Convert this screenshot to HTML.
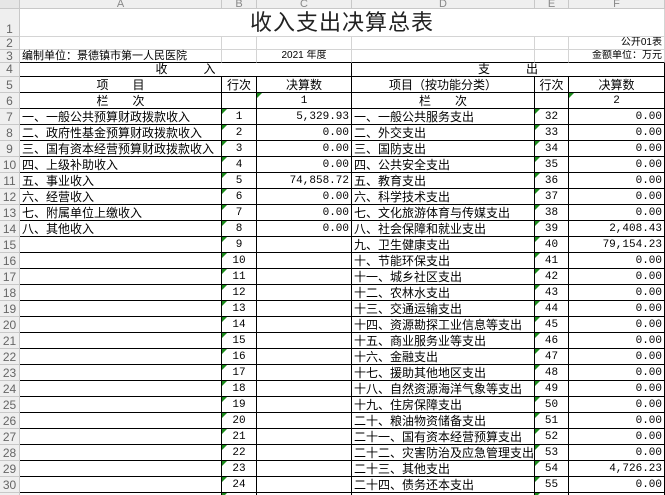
<!DOCTYPE html>
<html><head><meta charset="utf-8"><style>
*{margin:0;padding:0;box-sizing:border-box}
html,body{width:665px;height:495px;overflow:hidden}
body{background:#fff;font-family:"Liberation Sans","Noto Sans CJK SC",sans-serif;font-size:12px;color:#000}
table{border-collapse:separate;border-spacing:0;table-layout:fixed;width:665px}
td{border-right:1px solid #d4d4d4;border-bottom:1px solid #d4d4d4;padding:0 2px;white-space:nowrap;overflow:hidden;line-height:14px;vertical-align:bottom;position:relative}
td.h{background:#efefef;color:#666;text-align:center;border-color:#c8c8c8;font-size:12px;padding:0}
tr.ch td{background:#efefef;color:#888;text-align:center;font-size:11px;line-height:8px;vertical-align:top;border-color:#c8c8c8;overflow:hidden}
tr.r td{height:16px}
td.k{border-right:1px solid #000;border-bottom:1px solid #000}
td.bb{border-bottom:1px solid #000}
td.c{text-align:center}
td.n{text-align:right;font-family:"Liberation Mono",monospace;font-size:11px}
td.m{font-family:"Liberation Mono",monospace;font-size:11px;text-align:center}
td.g::before{content:"";position:absolute;left:0;top:0;border-top:5px solid #1a8a1a;border-right:5px solid transparent}
</style></head><body>
<table>
<colgroup><col style="width:20px"><col style="width:202px"><col style="width:35px"><col style="width:95px"><col style="width:183px"><col style="width:34px"><col style="width:96px"></colgroup>
<tr class="ch" style="height:8px"><td style="background:#e6e6e6"></td><td>A</td><td>B</td><td>C</td><td>D</td><td>E</td><td>F</td></tr>
<tr style="height:28px"><td class="h">1</td><td colspan="6" style="text-align:center;font-size:22px;line-height:26px;vertical-align:middle;letter-spacing:1px;color:#222">收入支出决算总表</td></tr>
<tr style="height:13px"><td class="h" style="line-height:12px">2</td><td></td><td></td><td></td><td></td><td></td><td style="text-align:right;font-size:10px;line-height:12px">公开01表</td></tr>
<tr style="height:13px"><td class="h" style="line-height:12px">3</td><td class="bb" style="font-size:11px;line-height:12px;overflow:visible">编制单位：景德镇市第一人民医院</td><td class="bb"></td><td class="bb" style="text-align:center;font-size:10px;line-height:12px">2021 年度</td><td class="bb"></td><td class="bb"></td><td class="bb" style="text-align:right;font-size:10px;line-height:12px">金额单位：万元</td></tr>
<tr style="height:14px"><td class="h" style="line-height:13px">4</td><td colspan="3" class="k c" style="line-height:13px">收　　　入</td><td colspan="3" class="k c" style="line-height:13px">支　　　出</td></tr>
<tr class="r"><td class="h">5</td><td class="k c">项　　目</td><td class="k c">行次</td><td class="k c">决算数</td><td class="k c">项目（按功能分类）</td><td class="k c">行次</td><td class="k c">决算数</td></tr>
<tr class="r"><td class="h">6</td><td class="k c">栏　　次</td><td class="k"></td><td class="k m g">1</td><td class="k c">栏　　次</td><td class="k"></td><td class="k m g">2</td></tr>
<tr class="r"><td class="h">7</td><td class="k">一、一般公共预算财政拨款收入</td><td class="k m g">1</td><td class="k n">5,329.93</td><td class="k">一、一般公共服务支出</td><td class="k m g">32</td><td class="k n">0.00</td></tr>
<tr class="r"><td class="h">8</td><td class="k">二、政府性基金预算财政拨款收入</td><td class="k m g">2</td><td class="k n">0.00</td><td class="k">二、外交支出</td><td class="k m g">33</td><td class="k n">0.00</td></tr>
<tr class="r"><td class="h">9</td><td class="k">三、国有资本经营预算财政拨款收入</td><td class="k m g">3</td><td class="k n">0.00</td><td class="k">三、国防支出</td><td class="k m g">34</td><td class="k n">0.00</td></tr>
<tr class="r"><td class="h">10</td><td class="k">四、上级补助收入</td><td class="k m g">4</td><td class="k n">0.00</td><td class="k">四、公共安全支出</td><td class="k m g">35</td><td class="k n">0.00</td></tr>
<tr class="r"><td class="h">11</td><td class="k">五、事业收入</td><td class="k m g">5</td><td class="k n">74,858.72</td><td class="k">五、教育支出</td><td class="k m g">36</td><td class="k n">0.00</td></tr>
<tr class="r"><td class="h">12</td><td class="k">六、经营收入</td><td class="k m g">6</td><td class="k n">0.00</td><td class="k">六、科学技术支出</td><td class="k m g">37</td><td class="k n">0.00</td></tr>
<tr class="r"><td class="h">13</td><td class="k">七、附属单位上缴收入</td><td class="k m g">7</td><td class="k n">0.00</td><td class="k">七、文化旅游体育与传媒支出</td><td class="k m g">38</td><td class="k n">0.00</td></tr>
<tr class="r"><td class="h">14</td><td class="k">八、其他收入</td><td class="k m g">8</td><td class="k n">0.00</td><td class="k">八、社会保障和就业支出</td><td class="k m g">39</td><td class="k n">2,408.43</td></tr>
<tr class="r"><td class="h">15</td><td class="k"></td><td class="k m g">9</td><td class="k"></td><td class="k">九、卫生健康支出</td><td class="k m g">40</td><td class="k n">79,154.23</td></tr>
<tr class="r"><td class="h">16</td><td class="k"></td><td class="k m g">10</td><td class="k"></td><td class="k">十、节能环保支出</td><td class="k m g">41</td><td class="k n">0.00</td></tr>
<tr class="r"><td class="h">17</td><td class="k"></td><td class="k m g">11</td><td class="k"></td><td class="k">十一、城乡社区支出</td><td class="k m g">42</td><td class="k n">0.00</td></tr>
<tr class="r"><td class="h">18</td><td class="k"></td><td class="k m g">12</td><td class="k"></td><td class="k">十二、农林水支出</td><td class="k m g">43</td><td class="k n">0.00</td></tr>
<tr class="r"><td class="h">19</td><td class="k"></td><td class="k m g">13</td><td class="k"></td><td class="k">十三、交通运输支出</td><td class="k m g">44</td><td class="k n">0.00</td></tr>
<tr class="r"><td class="h">20</td><td class="k"></td><td class="k m g">14</td><td class="k"></td><td class="k">十四、资源勘探工业信息等支出</td><td class="k m g">45</td><td class="k n">0.00</td></tr>
<tr class="r"><td class="h">21</td><td class="k"></td><td class="k m g">15</td><td class="k"></td><td class="k">十五、商业服务业等支出</td><td class="k m g">46</td><td class="k n">0.00</td></tr>
<tr class="r"><td class="h">22</td><td class="k"></td><td class="k m g">16</td><td class="k"></td><td class="k">十六、金融支出</td><td class="k m g">47</td><td class="k n">0.00</td></tr>
<tr class="r"><td class="h">23</td><td class="k"></td><td class="k m g">17</td><td class="k"></td><td class="k">十七、援助其他地区支出</td><td class="k m g">48</td><td class="k n">0.00</td></tr>
<tr class="r"><td class="h">24</td><td class="k"></td><td class="k m g">18</td><td class="k"></td><td class="k">十八、自然资源海洋气象等支出</td><td class="k m g">49</td><td class="k n">0.00</td></tr>
<tr class="r"><td class="h">25</td><td class="k"></td><td class="k m g">19</td><td class="k"></td><td class="k">十九、住房保障支出</td><td class="k m g">50</td><td class="k n">0.00</td></tr>
<tr class="r"><td class="h">26</td><td class="k"></td><td class="k m g">20</td><td class="k"></td><td class="k">二十、粮油物资储备支出</td><td class="k m g">51</td><td class="k n">0.00</td></tr>
<tr class="r"><td class="h">27</td><td class="k"></td><td class="k m g">21</td><td class="k"></td><td class="k">二十一、国有资本经营预算支出</td><td class="k m g">52</td><td class="k n">0.00</td></tr>
<tr class="r"><td class="h">28</td><td class="k"></td><td class="k m g">22</td><td class="k"></td><td class="k">二十二、灾害防治及应急管理支出</td><td class="k m g">53</td><td class="k n">0.00</td></tr>
<tr class="r"><td class="h">29</td><td class="k"></td><td class="k m g">23</td><td class="k"></td><td class="k">二十三、其他支出</td><td class="k m g">54</td><td class="k n">4,726.23</td></tr>
<tr class="r"><td class="h">30</td><td class="k"></td><td class="k m g">24</td><td class="k"></td><td class="k">二十四、债务还本支出</td><td class="k m g">55</td><td class="k n">0.00</td></tr>
<tr class="r"><td class="h"></td><td class="k"></td><td class="k g"></td><td class="k"></td><td class="k"></td><td class="k g"></td><td class="k"></td></tr>
</table>
</body></html>
